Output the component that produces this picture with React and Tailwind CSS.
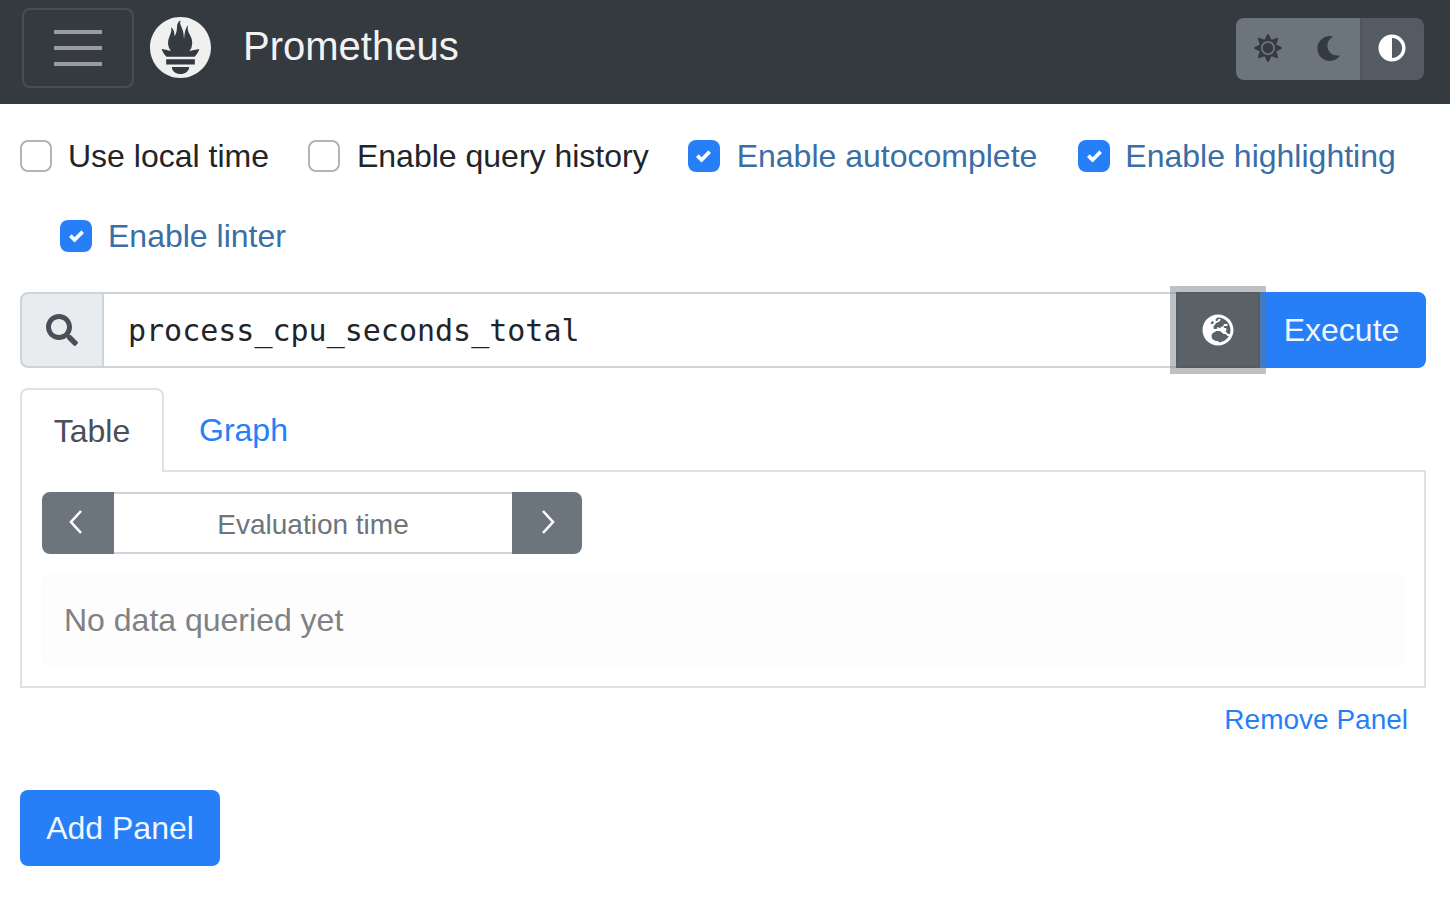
import React from "react";
import { FaSun, FaMoon, FaAdjust, FaSearch, FaGlobeEurope } from "react-icons/fa";
import { SiPrometheus } from "react-icons/si";

function Check({ label, checked, outer = "", gap = "ml-4" }) {
  return (
    <label className={`flex items-center h-12 mb-8 ${outer}`}>
      {checked ? (
        <span className="w-8 h-8 rounded-lg bg-[#277ff8] flex items-center justify-center">
          <svg viewBox="0 0 8 8" className="w-[15px] h-[15px]" aria-hidden="true">
            <path fill="#fff" d="M6.564.75l-3.59 3.612-1.538-1.55L0 4.26 2.974 7.25 8 2.193z" />
          </svg>
        </span>
      ) : (
        <span className="w-8 h-8 rounded-lg bg-white border-2 border-[#adb5bd]" />
      )}
      <span className={`${gap} text-[32px] leading-[48px] ${checked ? "text-[#3a6ea5]" : "text-[#212529]"}`}>{label}</span>
    </label>
  );
}

function Chevron({ dir }) {
  return (
    <svg viewBox="0 0 16 30" className="w-4 h-[30px]" fill="none" stroke="#fff" strokeWidth="2.6" aria-hidden="true">
      <path d={dir === "left" ? "M13 4 3 15l10 11" : "M3 4l10 11L3 26"} />
    </svg>
  );
}

export default function App() {
  return (
    <div className="min-h-[910px] bg-white font-['Liberation_Sans',Arial,sans-serif] text-[#212529]">
      <nav className="h-[104px] bg-[#343a3f] flex items-start pt-2 pl-[22px] pr-[26px]">
        <button className="w-[112px] h-20 rounded-lg border-2 border-[#484e53] flex items-center justify-center">
          <svg viewBox="0 0 48 36" className="w-12 h-9" aria-hidden="true">
            <path d="M0 2h48M0 18h48M0 34h48" stroke="#9a9c9f" strokeWidth="4" />
          </svg>
        </button>
        <SiPrometheus className="ml-4 mt-[9px] text-[#f0f0f0]" size={61} />
        <span className="ml-8 mt-[8px] text-[40px] leading-[60px] text-[#f2f2f2]">Prometheus</span>
        <div className="ml-auto mt-[10px] flex h-[62px] rounded-lg overflow-hidden">
          <div className="w-[62px] bg-[#6c757d] flex items-center justify-center pb-0.5">
            <FaSun className="text-[#343a40] ml-0.5" size={28} />
          </div>
          <div className="w-[62px] bg-[#6c757d] flex items-center justify-center pb-0.5 pr-0.5">
            <FaMoon className="text-[#343a40]" size={25} />
          </div>
          <div className="w-16 bg-[#545b62] border-l-2 border-[#4e555b] flex items-center justify-center pb-0.5 pr-0.5">
            <FaAdjust className="text-white" size={28} />
          </div>
        </div>
      </nav>

      <main className="pl-5 pr-6 pt-7">
        <div className="flex flex-wrap">
          <Check label="Use local time" />
          <Check label="Enable query history" outer="ml-[39px]" gap="ml-[17px]" />
          <Check label="Enable autocomplete" checked outer="ml-[39px]" gap="ml-[17px]" />
          <Check label="Enable highlighting" checked outer="ml-[41px]" gap="ml-[15px]" />
          <Check label="Enable linter" checked outer="ml-10" />
        </div>

        <div className="flex h-[76px]">
          <div className="w-[84px] bg-[#e9ecef] border-2 border-[#ced4da] rounded-l-lg flex items-center justify-center">
            <FaSearch className="text-[#495057]" size={32} />
          </div>
          <input
            readOnly
            value="process_cpu_seconds_total"
            className="flex-1 min-w-0 border-y-2 border-[#ced4da] pl-6 font-['DejaVu_Sans_Mono',monospace] text-[30px] text-[#212529] outline-none"
          />
          <button className="relative w-[84px] bg-[#5a6268] border-2 border-[#545b62] shadow-[0_0_0_6px_rgba(108,117,125,0.45)] flex items-center justify-center">
            <FaGlobeEurope className="text-white" size={32} />
          </button>
          <button className="w-[166px] bg-[#277ff8] border-2 border-[#277ff8] rounded-r-lg text-[32px] text-[#f2f7ff] pr-[3px]">Execute</button>
        </div>

        <div className="mt-5 flex h-[84px]">
          <div className="w-[144px] h-[84px] bg-white border-2 border-b-0 border-[#dee2e6] rounded-t-lg flex items-center justify-center text-[32px] text-[#495057]">Table</div>
          <div className="flex-1 flex items-center pl-[35px] pt-[2px] border-b-2 border-[#dee2e6] text-[32px] text-[#277ff8]">Graph</div>
        </div>

        <div className="h-[216px] border-2 border-t-0 border-[#dee2e6] px-5 pt-5">
          <div className="flex h-[62px] w-[540px]">
            <button className="w-[72px] bg-[#6c757d] rounded-l-lg flex items-center justify-center pb-0.5 pr-1"><Chevron dir="left" /></button>
            <input
              readOnly
              placeholder="Evaluation time"
              className="flex-1 min-w-0 border-y-2 border-[#ced4da] pt-1 text-center text-[28px] placeholder:text-[#6c757d] outline-none"
            />
            <button className="w-[70px] bg-[#6c757d] rounded-r-lg flex items-center justify-center pb-0.5 pl-0.5"><Chevron dir="right" /></button>
          </div>
          <div className="mt-5 h-[92px] bg-[#fdfdfe] border-2 border-[#fcfcfd] rounded-lg flex items-center pl-[20px] text-[32px] text-[#818182]">No data queried yet</div>
        </div>

        <div className="flex justify-end pr-[18px] mt-[15px] text-[28px] leading-[34px] text-[#277ff8]">Remove Panel</div>

        <button className="mt-[53px] w-[200px] h-[76px] bg-[#277ff8] rounded-lg text-[32px] text-[#f2f7ff]">Add Panel</button>
      </main>
    </div>
  );
}
